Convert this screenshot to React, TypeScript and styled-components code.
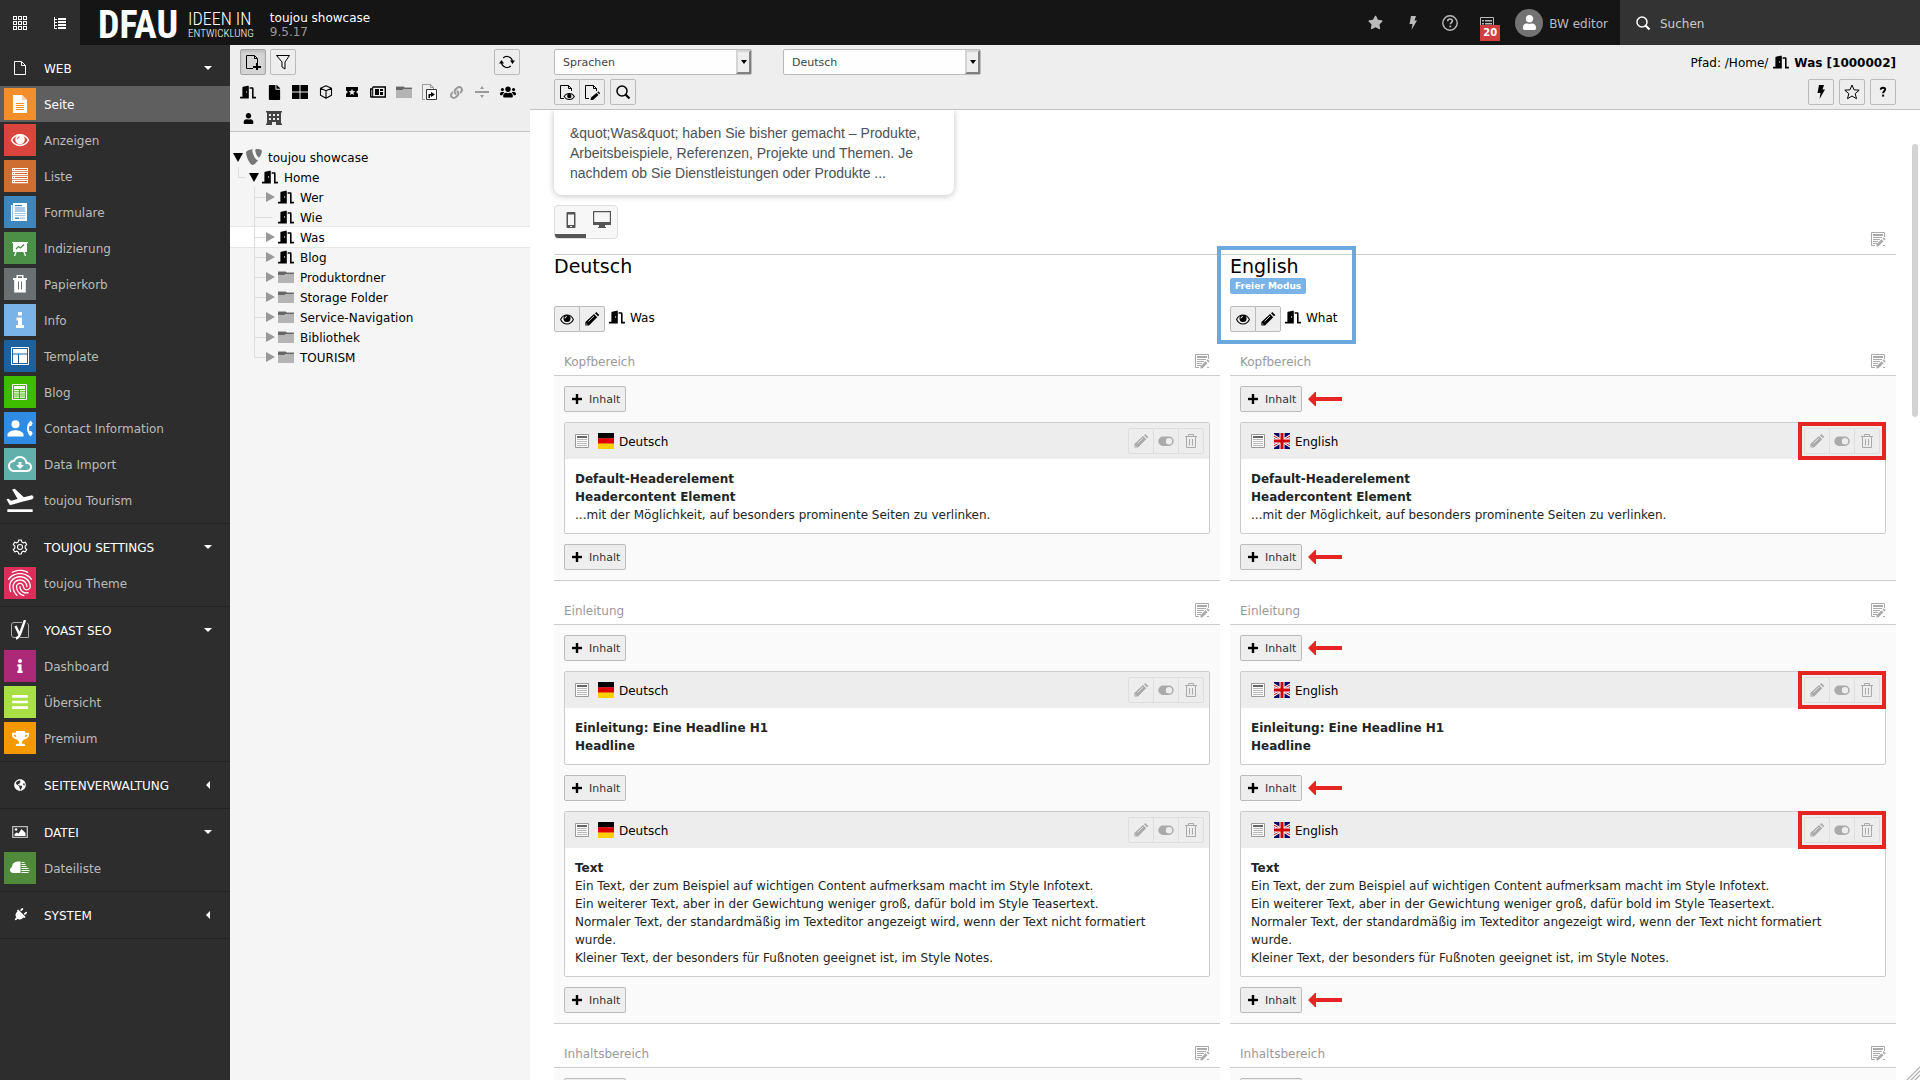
import React from "react";
import styled, { createGlobalStyle, css } from "styled-components";
import {
  FaBars,
  FaDoorOpen,
  FaFile,
  FaGlobeAmericas,
  FaInfo,
  FaPlug,
  FaStar,
  FaTrophy,
  FaUser,
  FaUsers,
  FaLink,
} from "react-icons/fa";
import { MdFingerprint, MdFlightTakeoff, MdOutlineCloudDownload } from "react-icons/md";
import { SiTypo3 } from "react-icons/si";

const GlobalStyle = createGlobalStyle`
  *, *::before, *::after { box-sizing: border-box; }
  body {
    margin: 0;
    font-family: "DejaVu Sans", Verdana, sans-serif;
    font-size: 12px;
    line-height: 18px;
    color: #000;
    background: #fff;
  }
  button, select, input { font: inherit; color: inherit; }
  button { cursor: pointer; }
  a { color: inherit; text-decoration: none; }
  svg { display: block; flex: none; }
  h1, h2, h3, p, ul { margin: 0; padding: 0; }
  ul { list-style: none; }
`;

/* ---------- icons ---------- */

type SvgProps = { size?: number; box?: number; children: React.ReactNode };

const Svg = ({ size = 16, box = 16, children }: SvgProps) => (
  <svg width={size} height={size} viewBox={`0 0 ${box} ${box}`} fill="currentColor" aria-hidden="true">
    {children}
  </svg>
);

const GridIcon = () => (
  <Svg>
    {[1.5, 6.5, 11.5].map((y) =>
      [1.5, 6.5, 11.5].map((x) => (
        <rect key={`${x}-${y}`} x={x} y={y} width="3" height="3" fill="none" stroke="currentColor" />
      )),
    )}
  </Svg>
);

const TreeListIcon = () => (
  <Svg>
    <path d="M2 2h1v12H2zM3 4h2v1H3zM3 7h2v1H3zM3 10h2v1H3zM3 13h2v1H3z" />
    <path d="M6 3h8v2H6zM6 6h8v2H6zM6 9h8v2H6zM6 12h8v2H6z" />
  </Svg>
);

const PageOutlineIcon = () => (
  <Svg>
    <path d="M2.5 1.5h7l4 4v9h-11zM9.5 1.5v4h4" fill="none" stroke="currentColor" />
  </Svg>
);

const PageNewIcon = () => (
  <Svg>
    <path d="M8 14.5H1.5v-13h8l3 3V9M9.5 1.5v3h3" fill="none" stroke="currentColor" />
    <path d="M11 9h2v3h3v2h-3v3h-2v-3H8v-2h3z" />
  </Svg>
);

const FilterIcon = () => (
  <Svg>
    <path d="M1.5 1.5h13L10 8v7l-3-2V8z" fill="none" stroke="currentColor" strokeLinejoin="round" />
  </Svg>
);

const RefreshIcon = () => (
  <Svg>
    <path d="M4.2 4A5.5 5.5 0 0 1 13.4 7M11.8 12A5.5 5.5 0 0 1 2.6 9" fill="none" stroke="currentColor" strokeWidth="1.2" />
    <path d="M11 6.5h5L13.5 10zM0 9.500h5L2.500 6z" />
  </Svg>
);

const TilesIcon = () => (
  <Svg>
    <path d="M0 1h7.500v6.500H0zM8.500 1H16v6.500H8.500zM0 8.500h7.500V15H0zM8.500 8.500H16V15H8.500z" />
  </Svg>
);

const CubeIcon = () => (
  <Svg>
    <path d="M8 1.800l5.500 2.400v7L8 14.200l-5.500-3v-7zM2.500 4.200L8 6.800l5.500-2.600M8 6.800v7.400" fill="none" stroke="currentColor" strokeWidth="1.100" strokeLinejoin="round" />
  </Svg>
);

const TicketIcon = () => (
  <Svg>
    <path
      fillRule="evenodd"
      d="M2 3h12v3.500a1.500 1.500 0 0 0 0 3V13H2V9.500a1.500 1.500 0 0 0 0-3zM8 4.800L7.100 7l-2.300.2 1.700 1.500-.5 2.300L8 9.800l2 1.200-.5-2.300 1.700-1.500L8.900 7z"
    />
  </Svg>
);

const NewsIcon = () => (
  <Svg>
    <path d="M2.700 3h12.600v10H1.500a.8.800 0 0 1-.8-.8V5h2" fill="none" stroke="currentColor" strokeWidth="1.400" />
    <path d="M2.200 3h1v10h-1zM5 5h4v6H5zM10 5h3v2h-3zM10 8h3v3h-3z" />
  </Svg>
);

const FolderIcon = () => (
  <Svg>
    <path d="M0 2h8v1h8v11H0z" fill="#b4b4b4" />
    <path d="M0 3h8l1 1h7v1H7L6.500 6H0z" fill="#666" />
  </Svg>
);

const ShortcutIcon = () => (
  <Svg>
    <path d="M3 15.500H.5V.500h8l3 3V5M8.500.500v3h3" fill="none" stroke="#999" />
    <path d="M4.500 5.500h10v10h-10z" fill="#fff" stroke="#333" />
    <path d="M9 8l4 2.500L9 13v-1.500H8V14H6.500v-4H9z" fill="#000" />
  </Svg>
);

const DividerIcon = () => (
  <Svg>
    <path d="M1 7h14v2H1zM8 2l2 3H6zM8 14l2-3H6z" fill="#999" />
  </Svg>
);

const HotelIcon = () => (
  <Svg>
    <path
      fillRule="evenodd"
      fill="#444"
      d="M0 1h16v1.500h-1v11h1V15h-6v-3H6v3H0v-1.500h1v-11H0zM3 4v2h2V4zM7 4v2h2V4zM11 4v2h2V4zM3 8v2h2V8zM7 8v2h2V8zM11 8v2h2V8z"
    />
  </Svg>
);

const PageViewIcon = () => (
  <Svg>
    <path d="M5 14.500H1.500v-13h8l3 3V7M9.500 1.500v3h3" fill="none" stroke="currentColor" />
    <path fillRule="evenodd" d="M4.500 12.500C6 10 8 9 10.300 9s4.200 1 5.700 3.500C14.500 15 12.500 16 10.300 16S6 15 4.500 12.500zm1.300 0c1.200 1.800 2.700 2.500 4.500 2.500s3.200-.700 4.400-2.500c-1.200-1.800-2.600-2.500-4.400-2.500s-3.300.700-4.500 2.500z" />
    <circle cx="10.300" cy="12" r="2.200" />
  </Svg>
);

const PageEditIcon = () => (
  <Svg>
    <path d="M5 14.500H1.500v-13h8l3 3V7M9.500 1.500v3h3" fill="none" stroke="currentColor" />
    <path d="M7 13.500l5.500-4.500 2 2L9 16H6.500zM13.200 8.200l1-1 2 2-1 1z" />
  </Svg>
);

const SearchIcon = () => (
  <Svg>
    <circle cx="7" cy="7" r="5" fill="none" stroke="currentColor" strokeWidth="1.500" />
    <path d="M10.500 10.500l4 4" stroke="currentColor" strokeWidth="2.200" />
  </Svg>
);

const BoltIcon = () => (
  <Svg>
    <path d="M6 1h5L9.500 5.500H12L6.500 15l1-6H4.500z" />
  </Svg>
);

const StarOutlineIcon = () => (
  <Svg>
    <path d="M8 1l2 4.800 5.200.4-4 3.400 1.300 5.100L8 12l-4.500 2.700 1.300-5.100-4-3.400L6 5.800z" fill="none" stroke="currentColor" />
  </Svg>
);

const HelpCircleIcon = () => (
  <Svg>
    <circle cx="8" cy="8" r="7.200" fill="none" stroke="currentColor" strokeWidth="1.400" />
    <path d="M5.700 6.200C5.700 4.700 6.700 4 8 4s2.400.800 2.400 2.100C10.400 7.500 8.300 7.700 8.300 9.300" fill="none" stroke="currentColor" strokeWidth="1.600" />
    <path d="M7.400 10.600h1.800v1.700H7.400z" />
  </Svg>
);

const QuestionIcon = () => (
  <Svg>
    <path d="M5.700 5.800C5.800 4.400 6.700 3.700 8 3.700s2.200.700 2.200 1.900C10.200 7 8.100 7.200 8.100 9.200" fill="none" stroke="currentColor" strokeWidth="1.900" />
    <path d="M7.100 10.600h2v2h-2z" />
  </Svg>
);

const SysInfoIcon = () => (
  <Svg>
    <path d="M1.500 2.500h13v11h-13z" fill="none" stroke="currentColor" />
    <path d="M3 5h2v1.500H3zM6 5h7v1.500H6zM3 8h2v1.500H3zM6 8h7v1.500H6z" />
  </Svg>
);

const EyeIcon = () => (
  <Svg>
    <path
      fillRule="evenodd"
      d="M1 8.500C2.500 5 5 3.500 8 3.500s5.500 1.500 7 5c-1.500 3.500-4 5-7 5s-5.500-1.500-7-5zm1.200 0c1.300 2.600 3.300 4 5.800 4s4.500-1.400 5.800-4c-1-2-2.500-3.200-4-3.700H6.200c-1.500.5-3 1.700-4 3.700z"
    />
    <circle cx="8" cy="7.600" r="3.500" />
    <path d="M6 7.400A2 2 0 0 1 7.900 5.500" fill="none" stroke="#fff" />
  </Svg>
);

const PencilIcon = () => (
  <Svg>
    <path d="M10 3l3.200 3.200L5 14.400H1.400V11z" />
    <path d="M11 2.200L12.300 1l3 3L14 5.300zM3 11.200l1.800 1.800" />
    <path d="M4.500 10.500l5.500-5.500M2.200 12.800l1.200 1" stroke="#eee" strokeWidth="0.800" />
  </Svg>
);

const ToggleIcon = () => (
  <Svg>
    <path fillRule="evenodd" d="M5 3.500h6a4.700 4.700 0 0 1 0 9.400H5a4.700 4.700 0 0 1 0-9.400zm6 1.500a3.200 3.200 0 1 0 0 6.400A3.200 3.200 0 0 0 11 5z" />
  </Svg>
);

const TrashIcon = () => (
  <Svg>
    <path d="M5.500 3V1.500h5V3M2 3.500h12M3.500 3.500v11h9v-11M6.500 6v6.500M9.500 6v6.500" fill="none" stroke="currentColor" />
  </Svg>
);

const PlusIcon = () => (
  <Svg size={10} box={10}>
    <path d="M4 0h2v4h4v2H6v4H4V6H0V4h4z" stroke="currentColor" strokeWidth="0.400" />
  </Svg>
);

const ContentEditIcon = () => (
  <Svg>
    <path d="M5 14.500H1.500v-13h13V6" fill="none" stroke="currentColor" />
    <path d="M3 3h10v2H3zM3 6h9v1H3zM3 8h7v1H3zM3 10h5v1H3zM3 12h4v1H3z" />
    <path d="M6.500 15.500v-2.200l5-5 2 2-5 5zM12.500 7.500l1.200-1.200 2 2-1.200 1.200zM13 14h2v1h-2z" />
  </Svg>
);

const TextElementIcon = () => (
  <Svg>
    <path d="M1.500 1.500h13v13h-13z" fill="#fff" stroke="#999" />
    <path d="M3 3h10v2H3z" fill="#666" />
    <path d="M3 6.500h10M3 8.500h10M3 10.500h10M3 12.500h10" stroke="#b9b9b9" />
  </Svg>
);

const GermanFlag = () => (
  <Svg>
    <path d="M0 0h16v5.500H0z" fill="#000" />
    <path d="M0 5.300h16v5.500H0z" fill="#d00" />
    <path d="M0 10.600h16V16H0z" fill="#ffce00" />
  </Svg>
);

const BritishFlag = () => (
  <Svg>
    <path d="M0 0h16v16H0z" fill="#006" />
    <path d="M-5 0l26 16M21 0L-5 16" stroke="#fff" strokeWidth="3" />
    <path d="M-5 0l26 16M21 0L-5 16" stroke="#c00" strokeWidth="1" />
    <path d="M8 0v16M0 8h16" stroke="#fff" strokeWidth="5" />
    <path d="M8 0v16M0 8h16" stroke="#c00" strokeWidth="3" />
  </Svg>
);

const PhoneIcon = () => (
  <Svg>
    <path fillRule="evenodd" d="M4.500 0h7a1 1 0 0 1 1 1v14a1 1 0 0 1-1 1h-7a1 1 0 0 1-1-1V1a1 1 0 0 1 1-1zM5 2.500v10.500h6V2.500zM7 14h2v1H7z" />
  </Svg>
);

const MonitorIcon = () => (
  <Svg size={18} box={18}>
    <path fillRule="evenodd" d="M0 0h18v14h-6v2h1v1H5v-1h1v-2H0zM1.200 1.200V11h15.600V1.200z" />
  </Svg>
);

const GearIcon = () => (
  <Svg>
    <circle cx="8" cy="8" r="2.500" fill="none" stroke="currentColor" strokeWidth="1.100" />
    <path
      d="M6.700 1h2.600l.5 2 1.500.8 2-.6 1.400 2.300-1.500 1.500v2l1.500 1.500-1.400 2.300-2-.6-1.500.8-.5 2H6.700l-.5-2-1.500-.8-2 .6-1.400-2.300L2.800 9V7L1.300 5.500l1.400-2.300 2 .6L6.200 3z"
      fill="none"
      stroke="currentColor"
      strokeWidth="1.100"
    />
  </Svg>
);

const YoastIcon = () => (
  <Svg size={20} box={20}>
    <path d="M12 2.500H4A2.500 2.500 0 0 0 1.500 5v10A2.500 2.500 0 0 0 4 17.500h2M10 17.500h8.500V5a2.500 2.500 0 0 0-1.500-2" fill="none" stroke="#aaa" />
    <path d="M5.500 6l3.800 8M15 0L10 14c-.8 2.500-2 4-4 4.500" fill="none" stroke="#fff" strokeWidth="2.400" />
  </Svg>
);

const ImageIcon = () => (
  <Svg>
    <path d="M.7 2.700h14.600v10.600H.7z" fill="none" stroke="#bbb" strokeWidth="1.300" />
    <circle cx="4" cy="5.500" r="1.300" />
    <path d="M2.500 12v-2l2-1.500 2 1L9.500 5l4 4v3z" />
  </Svg>
);

const ArrowLeftAnnotation = () => (
  <svg width="34" height="14" viewBox="0 0 34 14" fill="#e52521" aria-hidden="true">
    <path d="M0 7l7-7h1v5h26v4H8v5H7z" />
  </svg>
);

const ResizeGripIcon = () => (
  <svg width="13" height="13" viewBox="0 0 13 13" fill="none" stroke="#aaa" strokeWidth="1.200" aria-hidden="true">
    <path d="M0 13L13 0M4 13l9-9M8 13l5-5" />
  </svg>
);

/* white glyphs drawn on the coloured 32px module tiles */
const moduleGlyphs: Record<string, React.ReactNode> = {
  page: (
    <Svg size={32} box={32}>
      <path d="M9 7h9l5 5v13H9z" fill="#fff" />
      <path d="M18 7v5h5" fill="#fbd3a8" />
      <path d="M12 15.500h8M12 17.500h8M12 19.500h8M12 21.500h8" stroke="#f38f2a" />
    </Svg>
  ),
  view: (
    <Svg size={32} box={32}>
      <path d="M7.500 16.200C9.500 12.300 12.500 10.700 16 10.700s6.500 1.600 8.500 5.500c-2 3.700-5 5.300-8.500 5.300s-6.500-1.600-8.500-5.300z" fill="none" stroke="#fff" strokeWidth="1.500" />
      <circle cx="16" cy="15.500" r="4.800" fill="#fff" />
      <path d="M13.500 15.200A2.500 2.500 0 0 1 15.800 12.800" fill="none" stroke="#d9453c" />
    </Svg>
  ),
  list: (
    <Svg size={32} box={32}>
      {[8, 12, 16, 20].map((y) => (
        <path key={y} d={`M8 ${y}h16v3.200H8zM9.200 ${y + 1.100}h.800v1h-.800zM11 ${y + 1.100}v1h12v-1z`} fill="#fff" fillRule="evenodd" />
      ))}
    </Svg>
  ),
  form: (
    <Svg size={32} box={32}>
      <path d="M7 9h1.500v16H7zM7 24h12v1H7z" fill="#fff" />
      <path d="M9 7h14v18H9z" fill="#fff" />
      <path d="M11 9h7v1.200h-7z" fill="#3f86bd" />
      <path d="M11 11h10v5H11zM11 17h10v1H11zM11 19h10v1H11z" fill="#a9cbe6" />
      <path d="M11 21.500h4V23h-4z" fill="#3f86bd" />
      <path d="M16 21.500h5V23h-5z" fill="#a9cbe6" />
    </Svg>
  ),
  chart: (
    <Svg size={32} box={32}>
      <path d="M8 10h16v1h-1v9H9v-9H8z" fill="#fff" />
      <path d="M12 20l-1.500 4M20 20l1.500 4" stroke="#fff" strokeWidth="1.300" />
      <path d="M12 17l2.500-2.500 2 1.500 3.500-3.500" fill="none" stroke="#4c8f47" strokeWidth="1.300" />
    </Svg>
  ),
  trash: (
    <Svg size={32} box={32}>
      <path fillRule="evenodd" d="M12.500 7h7v3H23v2h-1.200v12.500H10.200V12H9v-2h3.500zM14 8.200V10h4V8.200z" fill="#fff" />
      <path d="M14.500 13.500v8M17.500 13.500v8" stroke="#6a6f71" />
    </Svg>
  ),
  info: (
    <Svg size={32} box={32}>
      <path d="M14 8h4v3.500h-4zM12.500 13.500H18V21h2v3h-8v-3h2v-4.500h-1.500z" fill="#fff" />
    </Svg>
  ),
  template: (
    <Svg size={32} box={32}>
      <path d="M7.500 7.500h17v17h-17z" fill="none" stroke="#fff" />
      <path d="M9 9h14v4.500H9zM9 14.500h5V23H9zM15 14.500h8V23h-8z" fill="#fff" />
    </Svg>
  ),
  blog: (
    <Svg size={32} box={32}>
      <path d="M8.500 8.500h14v15h-14z" fill="none" stroke="#fff" />
      <path d="M10 10h11v3H10zM10 14h5v1.200h-5zM16 14h5v1.200h-5zM10 16.200h5v1.200h-5zM16 16.200h5v1.200h-5zM10 18.400h5v1.200h-5zM16 18.400h5v1.200h-5zM10 20.600h5v1.200h-5zM16 20.600h5v1.200h-5z" fill="#fff" />
    </Svg>
  ),
  contact: (
    <Svg size={32} box={32}>
      <circle cx="11.500" cy="12.300" r="4" fill="#fff" />
      <path d="M3.500 24.500v-2c0-2.700 5.300-4.200 8-4.200s8 1.500 8 4.200v2z" fill="#fff" />
      <path d="M26.700 8.500l2 3-1.500 2.500h-1.700a8 8 0 0 0 0 5h1.700l1.500 2.500-2 3a10.500 10.500 0 0 1 0-16z" fill="#fff" />
    </Svg>
  ),
  cloud: <MdOutlineCloudDownload size={24} />,
  flight: <MdFlightTakeoff size={32} />,
  finger: <MdFingerprint size={32} />,
  dash: <FaInfo size={14} />,
  bars: <FaBars size={18} />,
  trophy: <FaTrophy size={17} />,
  files: (
    <Svg size={32} box={32}>
      <path d="M16.500 9.500V21H9a3 3 0 0 1-1.200-5.800 6.500 6.500 0 0 1 6.200-5.700z" fill="#fff" />
      <path d="M17.500 10h3v1h-3zM17.500 12h4v1h-4zM17.500 14h5v1h-5zM17.500 16h7v1h-7zM17.500 18h8v1h-8zM17.500 20h7v1h-7z" fill="#fff" />
    </Svg>
  ),
};

/* ---------- shell ---------- */

const Shell = styled.div`
  display: flex;
  flex-direction: column;
  height: 100vh;
  overflow: hidden;
`;

/* text that stands beside an icon sits slightly below the icon's middle */
const Label = styled.span`
  padding-top: 2px;
`;

const TopBar = styled.header`
  display: flex;
  flex: none;
  height: 45px;
  background: #151515;
  color: #bbb;
`;

const MenuToggles = styled.div`
  display: flex;
  width: 80px;
  background: #2d2d2d;
  color: #fff;
`;

const BarButton = styled.button`
  display: flex;
  flex: 1;
  align-items: center;
  justify-content: center;
  padding: 0;
  border: 0;
  background: none;
`;

const Brand = styled.a`
  display: flex;
  align-items: center;
  gap: 10px;
  margin-left: 18px;
  padding-top: 4px;
  color: #fff;
`;

const BrandMark = styled.span`
  font: 700 38px/38px "Roboto Condensed", "Liberation Sans Narrow", "DejaVu Sans Condensed", sans-serif;
`;

const BrandClaim = styled.span`
  display: flex;
  flex-direction: column;
  font-family: "Roboto Condensed", "Liberation Sans Narrow", Roboto, sans-serif;
  font-weight: 300;
`;

const ClaimLine = styled.span<{ $size: number }>`
  font-size: ${(p) => p.$size}px;
  line-height: ${(p) => p.$size}px;
  white-space: nowrap;
`;

const SiteInfo = styled.div`
  display: flex;
  flex-direction: column;
  justify-content: center;
  margin-left: 16px;
  padding-top: 4px;
  line-height: 14px;
  color: #999;
`;

const SiteName = styled.span`
  color: #fff;
`;

const Tools = styled.nav`
  display: flex;
  margin-left: auto;
`;

const Tool = styled.button`
  position: relative;
  display: flex;
  align-items: center;
  justify-content: center;
  width: 37px;
  padding: 0;
  border: 0;
  background: none;
`;

const Badge = styled.span`
  position: absolute;
  top: 25px;
  left: 12px;
  width: 20px;
  background: #d13f41;
  color: #fff;
  font-size: 10px;
  line-height: 16px;
  font-weight: 700;
  text-align: center;
`;

const UserButton = styled(Tool)`
  gap: 6px;
  width: auto;
  padding: 0 12px 0 10px;
`;

const Avatar = styled.span`
  display: flex;
  align-items: center;
  justify-content: center;
  width: 28px;
  height: 28px;
  border-radius: 50%;
  background: #737373;
  color: #fff;
`;

const SearchBox = styled.label`
  display: flex;
  align-items: center;
  gap: 9px;
  width: 300px;
  padding: 0 15px;
  background: #333;
  color: #fff;
`;

const SearchInput = styled.input`
  flex: 1;
  min-width: 0;
  padding: 2px 0 0;
  border: 0;
  outline: 0;
  background: none;
  &::placeholder {
    color: #ccc;
    opacity: 1;
  }
`;

const Body = styled.div`
  display: flex;
  flex: 1;
  min-height: 0;
`;

/* ---------- module menu ---------- */

const ModuleMenu = styled.nav`
  flex: none;
  width: 230px;
  overflow: hidden;
  background: #2d2d2d;
  color: #bbb;
`;

const ModuleGroup = styled.section`
  padding: 5px 0;
  border-bottom: 1px solid #222;
`;

const rowBase = css`
  display: flex;
  align-items: center;
  gap: 8px;
  width: 100%;
  height: 36px;
  padding: 0 18px 0 4px;
  border: 0;
  text-align: left;
`;

const GroupHeader = styled.button`
  ${rowBase}
  background: none;
  color: #fff;
  text-transform: uppercase;
`;

const ModuleLink = styled.a<{ $active?: boolean }>`
  ${rowBase}
  ${(p) => p.$active && "background: #5f5f5f; color: #fff;"}
`;

const Tile = styled.span<{ $color?: string }>`
  display: flex;
  flex: none;
  align-items: center;
  justify-content: center;
  width: 32px;
  height: 32px;
  overflow: hidden;
  background: ${(p) => p.$color ?? "transparent"};
  color: #fff;
`;

const Slanted = styled.span`
  transform: rotate(45deg);
`;

const Caret = styled.span<{ $open?: boolean }>`
  margin-left: auto;
  border: 4px solid transparent;
  ${(p) =>
    p.$open
      ? "border-top-color: #fff; border-bottom: 0;"
      : "border-right-color: #fff; border-left: 0; margin-right: 2px;"}
`;

type Module = { name: string; glyph: string; color?: string; active?: boolean };
type Group = { name: string; icon: React.ReactNode; open?: boolean; modules: Module[] };

const groups: Group[] = [
  {
    name: "Web",
    icon: <PageOutlineIcon />,
    open: true,
    modules: [
      { name: "Seite", glyph: "page", color: "#f38f2a", active: true },
      { name: "Anzeigen", glyph: "view", color: "#d9453c" },
      { name: "Liste", glyph: "list", color: "#ce6f31" },
      { name: "Formulare", glyph: "form", color: "#3f86bd" },
      { name: "Indizierung", glyph: "chart", color: "#4c8f47" },
      { name: "Papierkorb", glyph: "trash", color: "#6a6f71" },
      { name: "Info", glyph: "info", color: "#79b3e7" },
      { name: "Template", glyph: "template", color: "#1c609e" },
      { name: "Blog", glyph: "blog", color: "#3ebd00" },
      { name: "Contact Information", glyph: "contact", color: "#2f8ce4" },
      { name: "Data Import", glyph: "cloud", color: "#62b0ac" },
      { name: "toujou Tourism", glyph: "flight" },
    ],
  },
  {
    name: "toujou Settings",
    icon: <GearIcon />,
    open: true,
    modules: [{ name: "toujou Theme", glyph: "finger", color: "#dd2d5a" }],
  },
  {
    name: "Yoast SEO",
    icon: <YoastIcon />,
    open: true,
    modules: [
      { name: "Dashboard", glyph: "dash", color: "#ac2977" },
      { name: "Übersicht", glyph: "bars", color: "#a8e046" },
      { name: "Premium", glyph: "trophy", color: "#f49a00" },
    ],
  },
  { name: "Seitenverwaltung", icon: <FaGlobeAmericas size={12} />, modules: [] },
  {
    name: "Datei",
    icon: <ImageIcon />,
    open: true,
    modules: [{ name: "Dateiliste", glyph: "files", color: "#528a3b" }],
  },
  {
    name: "System",
    icon: (
      <Slanted>
        <FaPlug size={14} />
      </Slanted>
    ),
    modules: [],
  },
];

/* ---------- page tree ---------- */

const TreePane = styled.aside`
  display: flex;
  flex: none;
  flex-direction: column;
  width: 300px;
  background: #f5f5f5;
`;

const TreeToolbar = styled.div`
  padding: 4px 10px 0;
  border-bottom: 1px solid #c3c3c3;
  background: #eee;
`;

const ToolbarRow = styled.div`
  display: flex;
  gap: 4px;
`;

const Push = styled.span`
  margin-left: auto;
`;

const IconButton = styled.button<{ $pressed?: boolean; $bare?: boolean }>`
  display: inline-flex;
  align-items: center;
  justify-content: center;
  width: 26px;
  height: 26px;
  padding: 0;
  border: 1px solid ${(p) => (p.$pressed ? "#a5a5a5" : "#bbb")};
  border-radius: 2px;
  background: ${(p) => (p.$pressed ? "#d5d5d5" : "#eee")};
  color: #000;
  ${(p) => p.$pressed && "box-shadow: inset 0 2px 3px rgba(0, 0, 0, 0.12);"}
  ${(p) => p.$bare && "border-color: transparent; background: none;"}
`;

const PageTypes = styled.div`
  display: flex;
  flex-wrap: wrap;
  margin: 4px -10px 0 -5px;
`;

const Tree = styled.ul`
  padding-top: 15px;
`;

const TreeRow = styled.li<{ $active?: boolean }>`
  display: flex;
  align-items: center;
  height: 20px;
  ${(p) => p.$active && "background: #fff; box-shadow: 0 1px #e6e6e6, 0 -1px #e6e6e6;"}
`;

const line = "linear-gradient(#dcdcdc, #dcdcdc)";

const Guide = styled.span<{ $kind: "blank" | "tee" | "elbow" }>`
  width: 16px;
  height: 20px;
  ${(p) =>
    p.$kind !== "blank" &&
    `background: ${line} 8px 0 / 1px ${p.$kind === "tee" ? "20px" : "10px"} no-repeat,
      ${line} 8px 10px / 8px 1px no-repeat;`}
`;

const Twisty = styled.button<{ $state: "open" | "closed" | "leaf" }>`
  display: flex;
  align-items: center;
  justify-content: center;
  width: 16px;
  height: 20px;
  padding: 0;
  border: 0;
  background: none;
  ${(p) => p.$state === "closed" && `background: ${line} 0 10px / 4px 1px no-repeat;`}
  ${(p) => p.$state === "leaf" && `background: ${line} 0 10px / 10px 1px no-repeat;`}
  &::before {
    content: "";
    border: 5px solid transparent;
    ${(p) => p.$state === "open" && "border-top: 9px solid #000; border-bottom: 0;"}
    ${(p) => p.$state === "closed" && "border-left: 9px solid #999; border-right: 0;"}
  }
`;

const TreeLink = styled.a`
  display: flex;
  align-items: center;
  gap: 6px;
`;

type Guides = "blank" | "tee" | "elbow";
type Node = {
  name: string;
  guides: Guides[];
  state: "open" | "closed" | "leaf";
  icon: "root" | "door" | "folder";
  active?: boolean;
};

const nodes: Node[] = [
  { name: "toujou showcase", guides: [], state: "open", icon: "root" },
  { name: "Home", guides: ["elbow"], state: "open", icon: "door" },
  { name: "Wer", guides: ["blank", "tee"], state: "closed", icon: "door" },
  { name: "Wie", guides: ["blank", "tee"], state: "leaf", icon: "door" },
  { name: "Was", guides: ["blank", "tee"], state: "closed", icon: "door", active: true },
  { name: "Blog", guides: ["blank", "tee"], state: "closed", icon: "door" },
  { name: "Produktordner", guides: ["blank", "tee"], state: "closed", icon: "folder" },
  { name: "Storage Folder", guides: ["blank", "tee"], state: "closed", icon: "folder" },
  { name: "Service-Navigation", guides: ["blank", "tee"], state: "closed", icon: "folder" },
  { name: "Bibliothek", guides: ["blank", "tee"], state: "closed", icon: "folder" },
  { name: "TOURISM", guides: ["blank", "elbow"], state: "closed", icon: "folder" },
];

const nodeIcons = {
  root: <SiTypo3 size={16} color="#777" />,
  door: <FaDoorOpen size={16} />,
  folder: <FolderIcon />,
};

const pageTypes: [string, React.ReactNode][] = [
  ["Standard", <FaDoorOpen size={16} />],
  ["Seite", <FaFile size={15} />],
  ["Übersicht", <TilesIcon />],
  ["Produkt", <CubeIcon />],
  ["Veranstaltung", <TicketIcon />],
  ["News", <NewsIcon />],
  ["Ordner", <FolderIcon />],
  ["Verweis", <ShortcutIcon />],
  ["Link", <FaLink size={13} color="#999" />],
  ["Trenner", <DividerIcon />],
  ["Team", <FaUsers size={16} />],
  ["Person", <FaUser size={11} />],
  ["Unterkunft", <HotelIcon />],
];

/* ---------- content pane ---------- */

const Main = styled.main`
  position: relative;
  display: flex;
  flex: 1;
  flex-direction: column;
  min-width: 0;
`;

const DocHeader = styled.div`
  display: flex;
  flex: none;
  flex-direction: column;
  gap: 4px;
  padding: 4px 24px;
  border-bottom: 1px solid #c3c3c3;
  background: #eee;
`;

const DocRow = styled.div`
  display: flex;
  align-items: center;
  gap: 5px;
`;

const SelectWrap = styled.span`
  position: relative;
  width: 198px;
  margin-right: 26px;
  &::before {
    content: "";
    position: absolute;
    top: 1px;
    right: 1px;
    bottom: 1px;
    width: 15px;
    border: 2px outset #d5d5d5;
    background: #eee;
    pointer-events: none;
  }
  &::after {
    content: "";
    position: absolute;
    top: 11px;
    right: 5px;
    border: 3px solid transparent;
    border-top: 4px solid #000;
    border-bottom: 0;
    pointer-events: none;
  }
`;

const Select = styled.select`
  appearance: none;
  display: block;
  width: 100%;
  height: 26px;
  padding: 2px 20px 0 8px;
  border: 1px solid #bbb;
  border-radius: 2px;
  background: #fefefe;
  color: #444;
  font-size: 11px;
`;

const Path = styled.div`
  display: flex;
  align-items: center;
  gap: 5px;
  margin-left: auto;
`;

const ButtonGroup = styled.div`
  display: flex;
  & > button + button {
    margin-left: -1px;
    border-top-left-radius: 0;
    border-bottom-left-radius: 0;
  }
`;

const Scroller = styled.div`
  flex: 1;
  min-height: 0;
  padding: 0 24px;
  overflow-y: auto;
  scrollbar-width: none;
`;

const ScrollThumb = styled.div`
  position: absolute;
  top: 99px;
  right: 2px;
  width: 6px;
  height: 273px;
  border-radius: 3px;
  background: #d3d3d3;
`;

const Grip = styled.div`
  position: absolute;
  right: 0;
  bottom: 0;
`;

const Snippet = styled.p`
  max-width: 400px;
  padding: 13px 16px 12px;
  border-radius: 0 0 8px 8px;
  box-shadow: 0 1px 6px rgba(32, 33, 36, 0.28);
  color: #4d5156;
  font: 14px/20px "Liberation Sans", Arial, sans-serif;
`;

const DeviceRow = styled.div`
  display: flex;
  align-items: flex-start;
  justify-content: space-between;
  height: 60px;
  padding-top: 10px;
  border-bottom: 1px solid #ccc;
`;

const Devices = styled.div`
  display: flex;
  overflow: hidden;
  border: 1px solid #dedede;
  border-radius: 4px;
  background: #f7f7f7;
`;

const Device = styled.button<{ $active?: boolean }>`
  display: flex;
  align-items: center;
  justify-content: center;
  width: 31px;
  height: 32px;
  padding: 0;
  border: 0;
  border-bottom: 4px solid ${(p) => (p.$active ? "#555" : "transparent")};
  background: none;
  color: #555;
`;

const EditLink = styled.button<{ $low?: boolean }>`
  padding: 0;
  border: 0;
  background: none;
  color: #aaa;
  ${(p) => p.$low && "align-self: flex-end; margin: 0 10px 7px 0;"}
`;

const Columns = styled.div`
  display: grid;
  grid-template-columns: 1fr 1fr;
  gap: 10px;
`;

const LangHeader = styled.div`
  position: relative;
  width: fit-content;
`;

const LangTitle = styled.h2`
  font-size: 19px;
  line-height: 23px;
  font-weight: 400;
`;

const BadgeRow = styled.div`
  height: 28px;
`;

const ModeBadge = styled.span`
  display: block;
  width: fit-content;
  padding: 1px 5px 0;
  border-radius: 2px;
  background: #79b3e7;
  color: #fff;
  font-size: 9px;
  line-height: 15px;
  font-weight: 700;
`;

const LangPage = styled.div`
  display: flex;
  gap: 4px;
`;

const PageName = styled.span`
  display: flex;
  align-items: center;
  gap: 5px;
  height: 22px;
`;

const BlueFrame = styled.span`
  position: absolute;
  top: -9px;
  right: -18px;
  bottom: -12px;
  left: -13px;
  border: 4px solid #6aa8de;
  pointer-events: none;
`;

const AreaHeader = styled.div`
  display: flex;
  align-items: center;
  justify-content: space-between;
  height: 44px;
  padding: 15px 10px 0;
  border-bottom: 1px solid #ccc;
  color: #999;
`;

const AreaTitle = styled.h3`
  padding-top: 2px;
  font-size: 12px;
  font-weight: 400;
`;

const AreaBody = styled.div`
  display: flex;
  flex-direction: column;
  gap: 10px;
  padding: 10px;
  border-bottom: 1px solid #ccc;
  background: #fafafa;
`;

const AddRow = styled.div`
  display: flex;
  align-items: center;
  gap: 6px;
`;

const AddButton = styled.button`
  display: flex;
  align-items: center;
  gap: 7px;
  width: 62px;
  height: 26px;
  padding: 0 0 0 7px;
  border: 1px solid #bbb;
  border-radius: 2px;
  background: #eee;
  color: #333;
  font-size: 11px;
  & > svg {
    color: #000;
  }
`;

const Card = styled.article`
  position: relative;
  border: 1px solid #ccc;
  border-radius: 2px;
  background: #fff;
`;

const CardHeader = styled.div`
  display: flex;
  align-items: center;
  gap: 8px;
  height: 36px;
  padding: 0 5px 0 9px;
  background: #ededed;
`;

const Language = styled.span`
  display: flex;
  align-items: center;
  gap: 5px;
`;

const CardActions = styled(ButtonGroup)`
  margin-left: auto;
  & > button {
    border-color: #dedede;
    background: none;
    color: #aaa;
  }
`;

const CardBody = styled.div`
  padding: 11px 26px 9px 10px;
  color: #212424;
`;

const RedFrame = styled.span`
  position: absolute;
  top: -1px;
  right: -1px;
  width: 88px;
  height: 38px;
  border: 4px solid #e52521;
  pointer-events: none;
`;

type Entry = { bold: string[]; lines: string[] };
const areas: { title: string; entries: Entry[] }[] = [
  {
    title: "Kopfbereich",
    entries: [
      {
        bold: ["Default-Headerelement", "Headercontent Element"],
        lines: ["...mit der Möglichkeit, auf besonders prominente Seiten zu verlinken."],
      },
    ],
  },
  {
    title: "Einleitung",
    entries: [
      { bold: ["Einleitung: Eine Headline H1", "Headline"], lines: [] },
      {
        bold: ["Text"],
        lines: [
          "Ein Text, der zum Beispiel auf wichtigen Content aufmerksam macht im Style Infotext.",
          "Ein weiterer Text, aber in der Gewichtung weniger groß, dafür bold im Style Teasertext.",
          "Normaler Text, der standardmäßig im Texteditor angezeigt wird, wenn der Text nicht formatiert wurde.",
          "Kleiner Text, der besonders für Fußnoten geeignet ist, im Style Notes.",
        ],
      },
    ],
  },
  { title: "Inhaltsbereich", entries: [] },
];

const NewContent = ({ marked }: { marked?: boolean }) => (
  <AddRow>
    <AddButton type="button">
      <PlusIcon />
      <Label>Inhalt</Label>
    </AddButton>
    {marked && <ArrowLeftAnnotation />}
  </AddRow>
);

const ContentCard = ({ entry, language, marked }: { entry: Entry; language: string; marked?: boolean }) => (
  <Card>
    <CardHeader>
      <TextElementIcon />
      <Language>
        {language === "Deutsch" ? <GermanFlag /> : <BritishFlag />}
        <Label>{language}</Label>
      </Language>
      <CardActions>
        <IconButton type="button" aria-label="Bearbeiten"><PencilIcon /></IconButton>
        <IconButton type="button" aria-label="Verbergen"><ToggleIcon /></IconButton>
        <IconButton type="button" aria-label="Löschen"><TrashIcon /></IconButton>
      </CardActions>
    </CardHeader>
    <CardBody>
      {entry.bold.map((t) => (
        <p key={t}><strong>{t}</strong></p>
      ))}
      {entry.lines.map((t) => (
        <p key={t}>{t}</p>
      ))}
    </CardBody>
    {marked && <RedFrame />}
  </Card>
);

const LanguageColumn = ({ language, page, free }: { language: string; page: string; free?: boolean }) => (
  <section>
    <LangHeader>
      <LangTitle>{language}</LangTitle>
      <BadgeRow>{free && <ModeBadge>Freier Modus</ModeBadge>}</BadgeRow>
      <LangPage>
        <ButtonGroup>
          <IconButton type="button" aria-label="Seite anzeigen"><EyeIcon /></IconButton>
          <IconButton type="button" aria-label="Seite bearbeiten"><PencilIcon /></IconButton>
        </ButtonGroup>
        <PageName>
          <FaDoorOpen size={16} />
          <Label>{page}</Label>
        </PageName>
      </LangPage>
      {free && <BlueFrame />}
    </LangHeader>
    {areas.map((area) => (
      <section key={area.title}>
        <AreaHeader>
          <AreaTitle>{area.title}</AreaTitle>
          <EditLink type="button" aria-label="Spalte bearbeiten"><ContentEditIcon /></EditLink>
        </AreaHeader>
        <AreaBody>
          <NewContent marked={free && area.entries.length > 0} />
          {area.entries.map((entry) => (
            <React.Fragment key={entry.bold[0]}>
              <ContentCard entry={entry} language={language} marked={free} />
              <NewContent marked={free} />
            </React.Fragment>
          ))}
        </AreaBody>
      </section>
    ))}
  </section>
);

export default function App() {
  return (
    <Shell>
      <GlobalStyle />
      <TopBar>
        <MenuToggles>
          <BarButton type="button" aria-label="Modulmenü"><GridIcon /></BarButton>
          <BarButton type="button" aria-label="Seitenbaum"><TreeListIcon /></BarButton>
        </MenuToggles>
        <Brand href="#">
          <BrandMark>DFAU</BrandMark>
          <BrandClaim>
            <ClaimLine $size={18}>IDEEN IN</ClaimLine>
            <ClaimLine $size={11}>ENTWICKLUNG</ClaimLine>
          </BrandClaim>
        </Brand>
        <SiteInfo>
          <SiteName>toujou showcase</SiteName>
          <span>9.5.17</span>
        </SiteInfo>
        <Tools>
          <Tool type="button" aria-label="Lesezeichen"><FaStar size={15} /></Tool>
          <Tool type="button" aria-label="Cache leeren"><BoltIcon /></Tool>
          <Tool type="button" aria-label="Hilfe"><HelpCircleIcon /></Tool>
          <Tool type="button" aria-label="Systeminformationen">
            <SysInfoIcon />
            <Badge>20</Badge>
          </Tool>
          <UserButton type="button">
            <Avatar><FaUser size={15} /></Avatar>
            <Label>BW editor</Label>
          </UserButton>
        </Tools>
        <SearchBox>
          <SearchIcon />
          <SearchInput type="text" placeholder="Suchen" aria-label="Suchen" />
        </SearchBox>
      </TopBar>
      <Body>
        <ModuleMenu>
          {groups.map((group) => (
            <ModuleGroup key={group.name}>
              <GroupHeader type="button">
                <Tile>{group.icon}</Tile>
                <Label>{group.name}</Label>
                <Caret $open={group.open} />
              </GroupHeader>
              {group.modules.map((m) => (
                <ModuleLink key={m.name} href="#" $active={m.active}>
                  <Tile $color={m.color}>{moduleGlyphs[m.glyph]}</Tile>
                  <Label>{m.name}</Label>
                </ModuleLink>
              ))}
            </ModuleGroup>
          ))}
        </ModuleMenu>
        <TreePane>
          <TreeToolbar>
            <ToolbarRow>
              <IconButton type="button" $pressed aria-label="Neue Seite"><PageNewIcon /></IconButton>
              <IconButton type="button" aria-label="Filter"><FilterIcon /></IconButton>
              <Push>
                <IconButton type="button" aria-label="Aktualisieren"><RefreshIcon /></IconButton>
              </Push>
            </ToolbarRow>
            <PageTypes>
              {pageTypes.map(([name, icon]) => (
                <IconButton key={name} type="button" $bare aria-label={name}>{icon}</IconButton>
              ))}
            </PageTypes>
          </TreeToolbar>
          <Tree>
            {nodes.map((node) => (
              <TreeRow key={node.name} $active={node.active}>
                {node.guides.map((g, i) => (
                  <Guide key={i} $kind={g} />
                ))}
                <Twisty type="button" $state={node.state} aria-label={node.name} />
                <TreeLink href="#">
                  {nodeIcons[node.icon]}
                  <Label>{node.name}</Label>
                </TreeLink>
              </TreeRow>
            ))}
          </Tree>
        </TreePane>
        <Main>
          <DocHeader>
            <DocRow>
              <SelectWrap>
                <Select aria-label="Ansicht" defaultValue="Sprachen">
                  <option>Sprachen</option>
                  <option>Spalten</option>
                </Select>
              </SelectWrap>
              <SelectWrap>
                <Select aria-label="Sprache" defaultValue="Deutsch">
                  <option>Deutsch</option>
                  <option>English</option>
                </Select>
              </SelectWrap>
              <Path>
                <Label>Pfad: /Home/</Label>
                <FaDoorOpen size={16} />
                <Label as="strong">Was [1000002]</Label>
              </Path>
            </DocRow>
            <DocRow>
              <ButtonGroup>
                <IconButton type="button" aria-label="Seite anzeigen"><PageViewIcon /></IconButton>
                <IconButton type="button" aria-label="Seite bearbeiten"><PageEditIcon /></IconButton>
              </ButtonGroup>
              <IconButton type="button" aria-label="Suche"><SearchIcon /></IconButton>
              <Push />
              <IconButton type="button" aria-label="Cache leeren"><BoltIcon /></IconButton>
              <IconButton type="button" aria-label="Lesezeichen setzen"><StarOutlineIcon /></IconButton>
              <IconButton type="button" aria-label="Hilfe"><QuestionIcon /></IconButton>
            </DocRow>
          </DocHeader>
          <Scroller>
            <Snippet>
              &amp;quot;Was&amp;quot; haben Sie bisher gemacht – Produkte, Arbeitsbeispiele, Referenzen, Projekte und
              Themen. Je nachdem ob Sie Dienstleistungen oder Produkte ...
            </Snippet>
            <DeviceRow>
              <Devices>
                <Device type="button" $active aria-label="Mobile Vorschau"><PhoneIcon /></Device>
                <Device type="button" aria-label="Desktop Vorschau"><MonitorIcon /></Device>
              </Devices>
              <EditLink type="button" $low aria-label="Bearbeiten"><ContentEditIcon /></EditLink>
            </DeviceRow>
            <Columns>
              <LanguageColumn language="Deutsch" page="Was" />
              <LanguageColumn language="English" page="What" free />
            </Columns>
          </Scroller>
          <ScrollThumb />
          <Grip><ResizeGripIcon /></Grip>
        </Main>
      </Body>
    </Shell>
  );
}
